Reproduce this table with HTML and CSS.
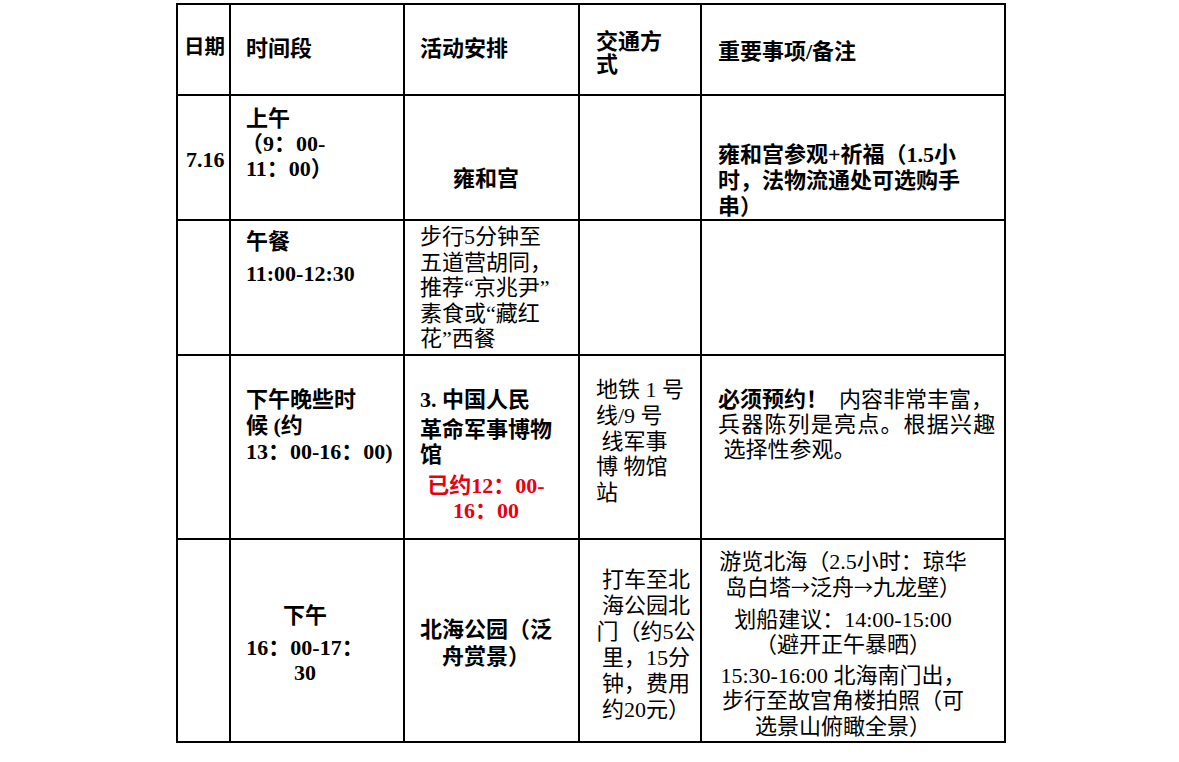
FILE: index.html
```html
<!DOCTYPE html>
<html lang="zh-CN">
<head>
<meta charset="utf-8">
<title>行程安排</title>
<link rel="stylesheet" href="styles.css">
</head>
<body>
<div class="grid">
  <div class="cell b h-date">日期</div>
  <div class="cell b h-time">时间段</div>
  <div class="cell b h-act">活动安排</div>
  <div class="cell b h-trans"><div>交通方</div><div>式</div></div>
  <div class="cell b h-note">重要事项/备注</div>

  <div class="cell b date r1-date">7.16</div>
  <div class="cell b time r1-time"><div>上午</div><div><span class="open">（</span>9：00-</div><div>11：00）</div></div>
  <div class="cell b act center r1-act">雍和宫</div>
  <div class="cell trans"></div>
  <div class="cell b note r1-note"><div>雍和宫参观+祈福（1.5小</div><div>时，法物流通处可选购手</div><div>串）</div></div>

  <div class="cell date"></div>
  <div class="cell b time r2-time"><div>午餐</div><div class="para">11:00-12:30</div></div>
  <div class="cell act r2-act"><div>步行5分钟至</div><div>五道营胡同，</div><div>推荐“京兆尹”</div><div>素食或“藏红</div><div>花”西餐</div></div>
  <div class="cell trans"></div>
  <div class="cell note"></div>

  <div class="cell date"></div>
  <div class="cell b time r3-time"><div>下午晚些时</div><div>候 (约</div><div>13：00-16：00)</div></div>
  <div class="cell b act r3-act"><div>3. 中国人民</div><div class="nudge">革命军事博物</div><div>馆</div><div class="red center para">已约12：00-</div><div class="red center">16：00</div></div>
  <div class="cell trans r3-trans"><div>地铁 1 号</div><div>线/9 号</div><div>&nbsp;线军事</div><div>博 物馆</div><div>站</div></div>
  <div class="cell note r3-note"><div><b>必须预约！</b>&nbsp;&nbsp;内容非常丰富，</div><div class="spread">兵器陈列是亮点。根据兴趣</div><div>&nbsp;选择性参观。</div></div>

  <div class="cell date"></div>
  <div class="cell b time center r4-time"><div>下午</div><div class="para">16：00-17：</div><div>30</div></div>
  <div class="cell b act center r4-act"><div>北海公园（泛</div><div class="nudge-s">舟赏景）</div></div>
  <div class="cell trans center r4-trans"><div>打车至北</div><div>海公园北</div><div>门（约5公</div><div>里，15分</div><div>钟，费用</div><div>约20元）</div></div>
  <div class="cell note center r4-note"><div>游览北海（2.5小时：琼华</div><div>岛白塔<span class="arrow">→</span>泛舟<span class="arrow">→</span>九龙壁）</div><div class="para">划船建议：14:00-15:00</div><div>（避开正午暴晒）</div><div class="para-s">15:30-16:00 北海南门出，</div><div>步行至故宫角楼拍照（可</div><div>选景山俯瞰全景）</div></div>
</div>
</body>
</html>
```

FILE: styles.css
```css
html, body {
  margin: 0;
  padding: 0;
  background: #fff;
}

body {
  font-family: "Liberation Serif", "Noto Sans CJK SC", serif;
  color: #000;
}

.grid {
  display: grid;
  grid-template-columns: 51px 172px 173px 120px 302px;
  grid-template-rows: 89px 123px 133px 182px 201px;
  gap: 2px;
  background: #000;
  border: 2px solid #000;
  width: max-content;
  margin: 3px 0 0 176px;
}

.cell {
  background: #fff;
  font-size: 22px;
  line-height: 25.6px;
  white-space: nowrap;
  box-sizing: border-box;
  overflow: visible;
}

.b { font-weight: 700; }
.center { text-align: center; }
.red { color: #e8000f; }

/* header */
.h-date { padding: 30px 0 0 6px; font-size: 20.5px; }
.h-time { padding: 31px 0 0 15px; }
.h-act { padding: 31px 0 0 15px; }
.h-trans { padding: 25px 0 0 16px; line-height: 23px; }
.h-note { padding: 34px 0 0 16px; }

/* columns */
.date { padding-left: 8px; }
.time { padding-left: 15px; }
.act { padding: 0 26px 0 15px; }
.trans { padding-left: 16px; }
.note { padding-left: 16px; }

.para { margin-top: 6.7px; }
.para-s { margin-top: 5.4px; }
.nudge { margin-top: 4.4px; }
.nudge-s { margin-top: 1.8px; }
.open { margin-left: -5px; }
.spread { letter-spacing: 1.2px; }
.arrow {
  font-family: "Noto Sans CJK SC", sans-serif;
  font-size: 19px;
}

/* row 1 */
.r1-date { padding-top: 50.5px; }
.r1-time { padding-top: 10px; line-height: 25px; }
.r1-act { padding-top: 69.5px; }
.r1-note { padding-top: 46px; line-height: 25.8px; }

/* row 2 */
.r2-time { padding-top: 8px; }
.r2-act { padding-top: 3px; }

/* row 3 */
.r3-time { padding-top: 31.2px; line-height: 25.8px; }
.r3-act { padding-top: 31.2px; line-height: 25px; }
.r3-trans { padding-top: 21.2px; line-height: 25.7px; }
.r3-note { padding-top: 31.2px; line-height: 25px; }

/* row 4 */
.r4-time { padding: 63.2px 38px 0 14px; line-height: 25px; }
.r4-act { padding-top: 76.5px; }
.r4-trans { padding: 27.2px 4px 0 16px; line-height: 26px; }
.r4-note { padding: 8.9px 37px 0 17px; line-height: 25.3px; }
```
